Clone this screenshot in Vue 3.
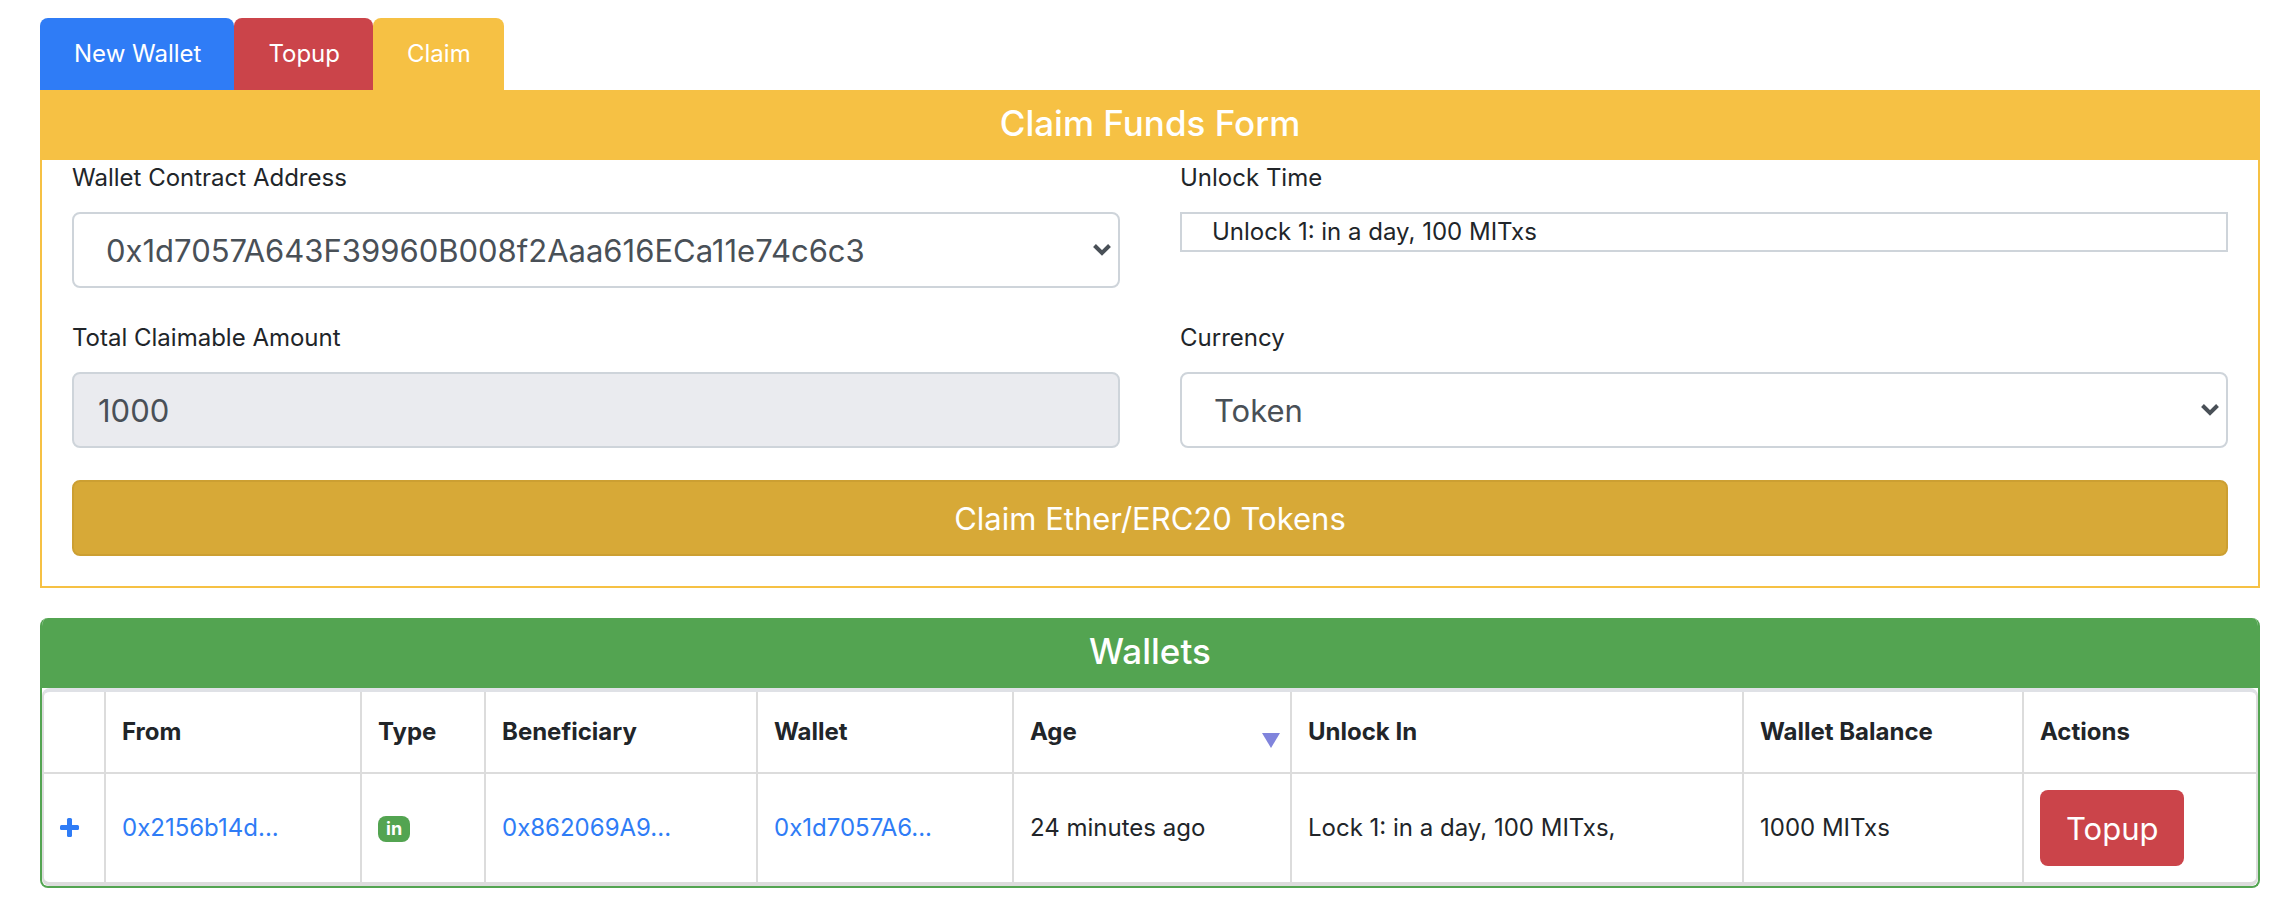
<script setup>
import { ref } from 'vue'

const tabs = [
  { label: 'New Wallet', tone: 'blue' },
  { label: 'Topup', tone: 'red' },
  { label: 'Claim', tone: 'yellow' },
]
const address = ref('0x1d7057A643F39960B008f2Aaa616ECa11e74c6c3')
const currency = ref('Token')
const amount = ref('1000')
const wallets = [
  {
    from: '0x2156b14d...',
    type: 'in',
    beneficiary: '0x862069A9...',
    wallet: '0x1d7057A6...',
    age: '24 minutes ago',
    unlock: 'Lock 1: in a day, 100 MITxs,',
    balance: '1000 MITxs',
  },
]
</script>

<template>
  <main class="page">
    <nav class="tabs">
      <button v-for="tab in tabs" :key="tab.label" type="button" class="tab" :class="tab.tone">{{ tab.label }}</button>
    </nav>

    <section class="claim">
      <h4 class="title yellow">Claim Funds Form</h4>
      <form class="form" @submit.prevent>
        <div class="field">
          <label for="address">Wallet Contract Address</label>
          <div class="picker">
            <select id="address" v-model="address" class="control">
              <option>0x1d7057A643F39960B008f2Aaa616ECa11e74c6c3</option>
            </select>
            <svg class="chevron" viewBox="0 0 20 14" aria-hidden="true"><path d="M2.5 2.5 10 10 17.5 2.5" /></svg>
          </div>
        </div>
        <div class="field">
          <label for="unlock">Unlock Time</label>
          <select id="unlock" class="list" multiple size="1">
            <option>Unlock 1: in a day, 100 MITxs</option>
          </select>
        </div>
        <div class="field">
          <label for="amount">Total Claimable Amount</label>
          <input id="amount" v-model="amount" class="control amount" type="text" readonly />
        </div>
        <div class="field">
          <label for="currency">Currency</label>
          <div class="picker">
            <select id="currency" v-model="currency" class="control">
              <option>Token</option>
            </select>
            <svg class="chevron" viewBox="0 0 20 14" aria-hidden="true"><path d="M2.5 2.5 10 10 17.5 2.5" /></svg>
          </div>
        </div>
        <button type="submit" class="submit">Claim Ether/ERC20 Tokens</button>
      </form>
    </section>

    <section class="wallets">
      <h4 class="title green">Wallets</h4>
      <div class="frame">
        <table>
          <colgroup>
            <col class="c-plus" />
            <col class="c-hash" />
            <col class="c-type" />
            <col class="c-ben" />
            <col class="c-hash" />
            <col class="c-age" />
            <col />
            <col class="c-bal" />
            <col class="c-act" />
          </colgroup>
          <thead>
            <tr>
              <th></th>
              <th>From</th>
              <th>Type</th>
              <th>Beneficiary</th>
              <th>Wallet</th>
              <th>
                <div class="sorted">
                  Age
                  <svg class="caret" viewBox="0 0 18 18" aria-hidden="true"><path d="M0 1H18L9 16Z" /></svg>
                </div>
              </th>
              <th>Unlock In</th>
              <th>Wallet Balance</th>
              <th>Actions</th>
            </tr>
          </thead>
          <tbody>
            <tr v-for="row in wallets" :key="row.from">
              <td>
                <a href="#" class="expand" aria-label="Expand">
                  <svg viewBox="0 0 20 20" aria-hidden="true">
                    <rect x="0" y="7" width="19" height="5" rx="1.5" />
                    <rect x="7" y="0" width="5" height="19" rx="1.5" />
                  </svg>
                </a>
              </td>
              <td><a href="#">{{ row.from }}</a></td>
              <td><span class="badge">{{ row.type }}</span></td>
              <td><a href="#">{{ row.beneficiary }}</a></td>
              <td><a href="#">{{ row.wallet }}</a></td>
              <td>{{ row.age }}</td>
              <td>{{ row.unlock }}</td>
              <td>{{ row.balance }}</td>
              <td><button type="button" class="topup">Topup</button></td>
            </tr>
          </tbody>
        </table>
      </div>
    </section>
  </main>
</template>

<style>
body {
  background: #fff;
}
</style>

<style scoped>
.page,
.page * {
  box-sizing: border-box;
}
.page {
  padding: 18px 36px 32px 40px;
  font: 400 24px/36px Inter, "Liberation Sans", sans-serif;
  color: #212529;
}
button,
input,
select,
option {
  font: inherit;
  margin: 0;
}
.tabs {
  display: flex;
}
.tab {
  padding: 18px 33px 18px 34px;
  border: 0;
  border-radius: 8px 8px 0 0;
  color: #fff;
}
.blue {
  background: #2f7cf6;
}
.red {
  background: #cb444a;
}
.yellow {
  background: #f6c144;
}
.green {
  background: #53a451;
}
.title {
  margin: 0;
  padding: 12px 0 16px;
  font-size: 35px;
  line-height: 42px;
  font-weight: 500;
  text-align: center;
  color: #fff;
}
.claim {
  border: 2px solid #f6c144;
  border-top: 0;
}
.form {
  display: grid;
  grid-template-columns: 1fr 1fr;
  gap: 32px 60px;
  padding: 0 30px 30px;
}
.field {
  display: flex;
  flex-direction: column;
  gap: 16px;
}
.picker {
  display: grid;
  align-items: center;
  position: relative;
}
.control {
  appearance: none;
  width: 100%;
  height: 76px;
  padding: 2px 32px 0;
  border: 2px solid #ced4da;
  border-radius: 8px;
  background: #fff;
  color: #495057;
  font-size: 31px;
}
.amount {
  padding: 0 24px;
  background: #eaebef;
}
.chevron {
  position: absolute;
  right: 8px;
  width: 20px;
  height: 14px;
  fill: none;
  stroke: #495057;
  stroke-width: 4;
  pointer-events: none;
}
.list {
  appearance: none;
  height: 40px;
  padding: 0;
  border: 2px solid #ced4da;
  border-radius: 0;
  background: #fff;
  color: inherit;
  overflow: hidden;
}
.list option {
  min-height: 36px;
  padding: 3px 30px 0;
}
.submit {
  grid-column: 1 / -1;
  height: 76px;
  padding: 2px 26px 0;
  border: 2px solid #cc9f32;
  border-radius: 8px;
  background: #d7a937;
  color: #fff;
  font-size: 31px;
}
.wallets {
  margin-top: 30px;
  border: 2px solid #53a451;
  border-top: 0;
  border-radius: 8px;
  overflow: hidden;
}
.frame {
  border: 2px solid #dcdcdc;
  border-width: 4px 2px;
  border-top-color: #dfe1e6;
  border-radius: 8px;
}
table {
  width: 100%;
  table-layout: fixed;
  border-collapse: separate;
  border-spacing: 0;
}
th,
td {
  padding: 0 16px;
  border-right: 2px solid #dcdcdc;
  text-align: left;
  vertical-align: middle;
}
th:last-child,
td:last-child {
  border-right: 0;
}
th {
  height: 82px;
  border-bottom: 2px solid #dcdcdc;
  font-weight: 700;
}
td {
  height: 108px;
}
.c-plus {
  width: 62px;
}
.c-hash {
  width: 256px;
}
.c-type {
  width: 124px;
}
.c-ben {
  width: 272px;
}
.c-age {
  width: 278px;
}
.c-bal {
  width: 280px;
}
.c-act {
  width: 232px;
}
a {
  color: #2f7cf6;
  text-decoration: none;
}
.sorted {
  display: flex;
  align-items: flex-end;
  justify-content: space-between;
  margin-right: -6px;
}
.caret {
  width: 18px;
  height: 18px;
  fill: #8084dc;
}
.expand {
  display: flex;
}
.expand svg {
  width: 20px;
  height: 20px;
  fill: #2f7cf6;
}
.badge {
  display: inline-block;
  padding: 4px 8px;
  border-radius: 8px;
  background: #53a451;
  color: #fff;
  font-size: 18px;
  line-height: 18px;
  font-weight: 700;
  vertical-align: middle;
}
.topup {
  display: block;
  height: 76px;
  padding: 2px 26px 0;
  border: 0;
  border-radius: 8px;
  background: #cb444a;
  color: #fff;
  font-size: 31px;
}
</style>
